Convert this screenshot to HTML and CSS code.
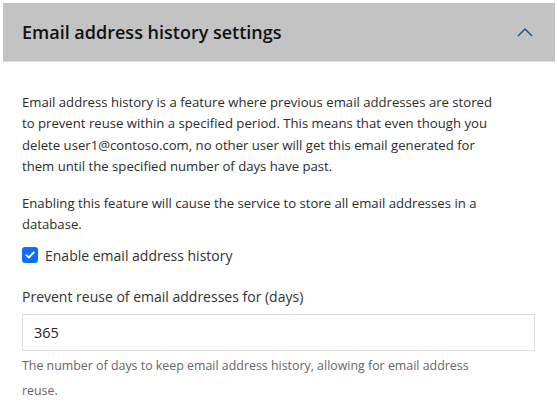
FILE: index.html
```html
<!DOCTYPE html>
<html>
<head>
<meta charset="utf-8">
<link rel="stylesheet" href="styles.css">
</head>
<body>
<div class="panel">
  <div class="header">
    <h2 class="title">Email address history settings</h2>
    <svg class="chevron" width="16" height="10" viewBox="0 0 16 10"><path d="M1 9 L8 2 L15 9" fill="none" stroke="#1c4f8f" stroke-width="1.4"/></svg>
  </div>
  <div class="body">
    <p class="desc">Email address history is a feature where previous email addresses are stored to prevent reuse within a specified period. This means that even though you delete user1@contoso.com, no other user will get this email generated for them until the specified number of days have past.</p>
    <p class="desc">Enabling this feature will cause the service to store all email addresses in a database.</p>
    <label class="check">
      <span class="box"><svg width="10" height="8" viewBox="0 0 10 8"><path d="M1.3 4.2 L3.8 6.5 L8.7 1.5" fill="none" stroke="#fff" stroke-width="1.8" stroke-linecap="round" stroke-linejoin="round"/></svg></span>
      <span class="check-label">Enable email address history</span>
    </label>
    <div class="field-label">Prevent reuse of email addresses for (days)</div>
    <div class="input">365</div>
    <div class="help">The number of days to keep email address history, allowing for email address reuse.</div>
  </div>
</div>
</body>
</html>
```
FILE: styles.css
```css
html, body {
  margin: 0;
  padding: 0;
  background: #fff;
}
.panel {
  padding: 3px 2px 0 3px;
  font-family: "Open Sans", sans-serif;
  color: #222;
}
.header {
  height: 58px;
  background: #c3c3c3;
  border-bottom: 1px solid #dcdcdc;
  display: flex;
  align-items: center;
  justify-content: space-between;
  padding: 0 22px 0 19px;
}
.title {
  margin: 0;
  font-size: 18px;
  font-weight: 600;
  color: #111;
}
.chevron {
  display: block;
}
.body {
  padding: 30px 20px 0 19px;
}
.desc {
  margin: 0;
  max-width: 483px;
  font-size: 13.15px;
  line-height: 21.3px;
  color: #2b2b2b;
}
.desc + .desc {
  margin-top: 16px;
}
.check {
  display: flex;
  align-items: center;
  gap: 7px;
  margin-top: 10px;
  height: 19px;
}
.box {
  width: 16px;
  height: 16px;
  border-radius: 3px;
  background: #0d6efd;
  display: flex;
  align-items: center;
  justify-content: center;
}
.box svg { display: block; }
.check-label {
  font-size: 14px;
  line-height: 19px;
  color: #333;
}
.field-label {
  margin-top: 22px;
  font-size: 14px;
  line-height: 19px;
  color: #333;
}
.input {
  margin-top: 8px;
  height: 35px;
  border: 1px solid #dedede;
  padding: 0 11px;
  display: flex;
  align-items: center;
  font-size: 14.5px;
  color: #222;
}
.help {
  margin-top: 3.5px;
  max-width: 480px;
  font-size: 12.4px;
  line-height: 24.5px;
  color: #666;
}
```
